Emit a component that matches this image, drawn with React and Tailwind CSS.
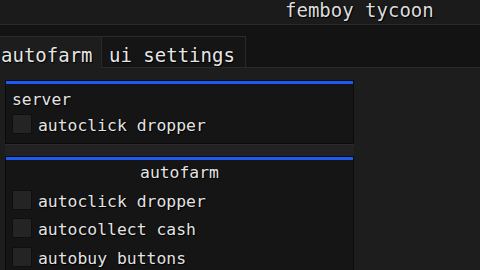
export default function App() {
  const mono = "font-['DejaVu_Sans_Mono',monospace]";
  const shadow = "[text-shadow:0_0_1px_#000,1px_1px_1px_#000]";
  const Check = ({ label }) => (
    <div className="flex items-start h-[20px]">
      <div className="w-[20px] h-[20px] shrink-0 bg-[#242424] border border-[#0f0f0f]" />
      <span className={`ml-[6px] mt-[2px] leading-[20px] text-[16.4px] text-[#e4e4e4] ${shadow} whitespace-nowrap`}>{label}</span>
    </div>
  );
  return (
    <div className={`w-[480px] h-[270px] overflow-hidden bg-[#1d1d1d] ${mono}`}>
      <div className="h-[25px] bg-[#1b1b1b] border-b border-[#2a2a2a] pl-[285px]">
        <span className={`block leading-[20px] text-[19px] text-[#dcdcdc] ${shadow} whitespace-nowrap`}>femboy tycoon</span>
      </div>
      <div className="h-[43px] bg-[#131313] flex items-end">
        <div className="h-[32px] w-[101px] bg-[#1d1d1d] border-t border-[#2a2a2a] pl-[1px] pt-[6.5px]">
          <span className={`block leading-[22px] text-[19px] text-[#e6e6e6] ${shadow}`}>autofarm</span>
        </div>
        <div className="h-[32px] w-[145px] bg-[#151515] border border-[#2a2a2a] pl-[7px] pt-[6.5px]">
          <span className={`block leading-[22px] text-[19px] text-[#e6e6e6] ${shadow} whitespace-nowrap`}>ui settings</span>
        </div>
        <div className="flex-1 h-[32px] border-b border-[#2a2a2a]" />
      </div>
      <div className="pt-[12px]">
        <div className="ml-[5px] w-[349px] bg-[#151515] border border-[#0b0b0b] pb-[9px]">
          <div className="h-[3px] bg-[#1c5af3]" />
          <div className={`mt-[6px] pl-[6px] leading-[20px] text-[16.4px] text-[#e4e4e4] ${shadow}`}>server</div>
          <div className="mt-[4px] pl-[6px]">
            <Check label="autoclick dropper" />
          </div>
        </div>
        <div className="ml-[5px] w-[349px] h-[12px] bg-[#222222] border-t border-[#2a2a2a]" />
        <div className="ml-[5px] w-[349px] bg-[#151515] border border-[#0b0b0b] pb-[9px]">
          <div className="h-[3px] bg-[#1c5af3]" />
          <div className={`mt-[3px] text-center leading-[20px] text-[16.4px] text-[#e4e4e4] ${shadow}`}>autofarm</div>
          <div className="mt-[7px] pl-[6px] flex flex-col gap-[8.3px]">
            <Check label="autoclick dropper" />
            <Check label="autocollect cash" />
            <Check label="autobuy buttons" />
          </div>
        </div>
      </div>
    </div>
  );
}
